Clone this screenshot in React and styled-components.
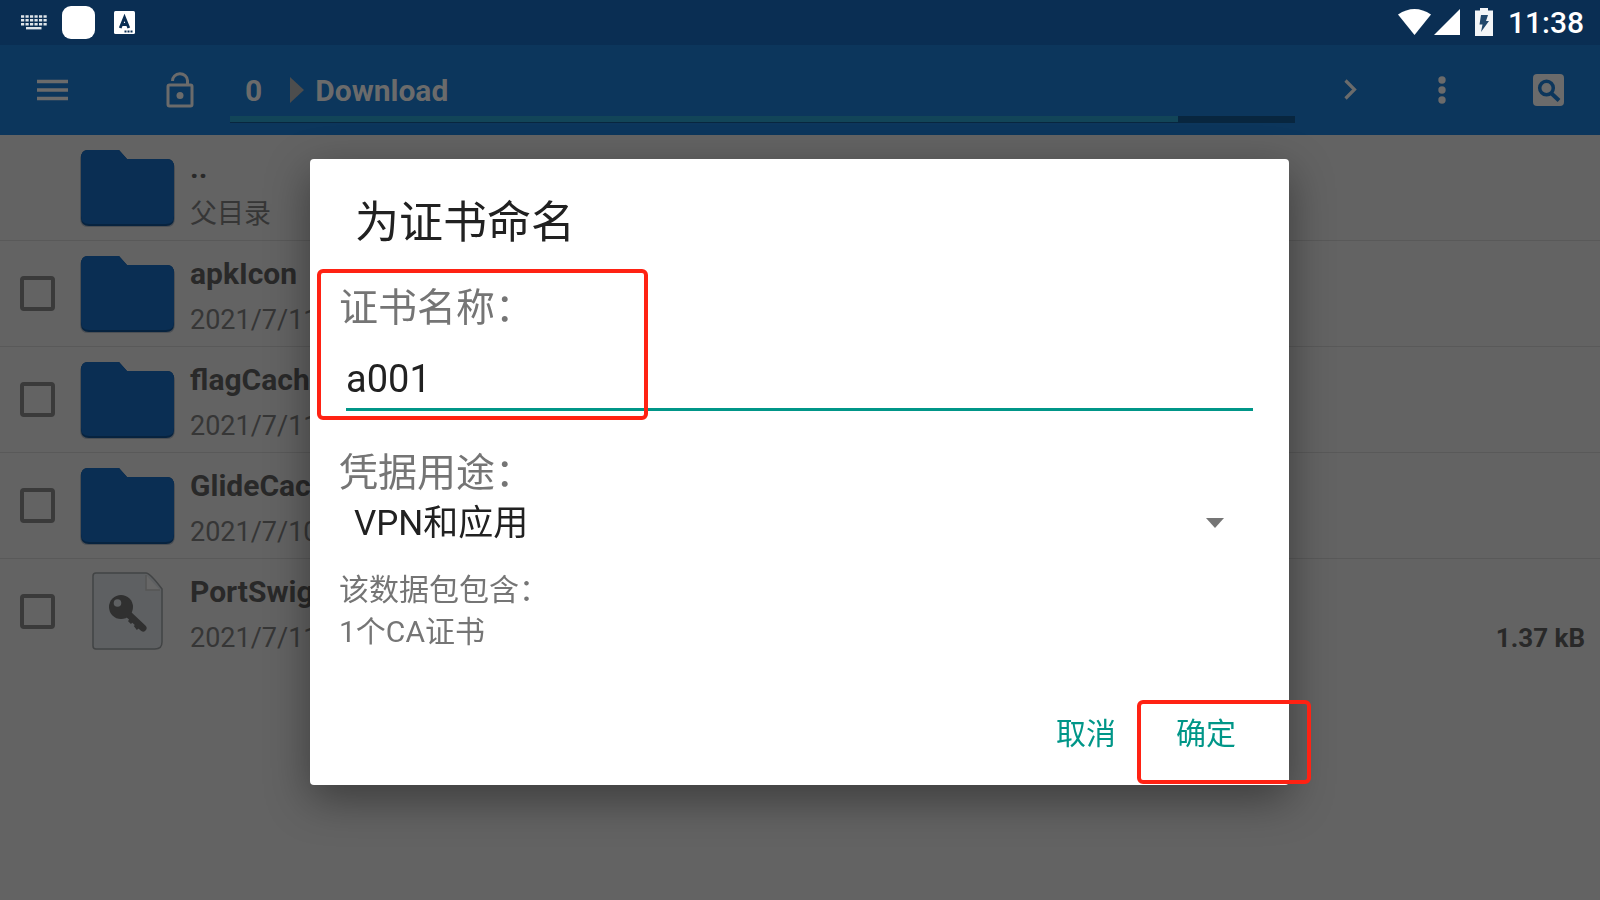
import React, { useState } from 'react';
import styled, { createGlobalStyle } from 'styled-components';

const GlobalStyle = createGlobalStyle`
    * {
        box-sizing: border-box;
    }
    body {
        margin: 0;
        background-color: #636363;
        font-family: Roboto, "Noto Sans CJK SC", sans-serif;
    }
    button, input, select {
        font-family: inherit;
    }
`;

const Screen = styled.div`
    min-height: 100vh;
    overflow: hidden;
`;

const StatusBar = styled.header`
    display: flex;
    align-items: center;
    justify-content: space-between;
    height: 45px;
    padding: 0 16px 0 21px;
    background-color: #0a2e53;
    color: #fff;
`;

const StatusGroup = styled.div`
    display: flex;
    align-items: center;
    gap: ${props => props.$gap}px;
`;

const AppBadge = styled.span`
    width: 33px;
    height: 33px;
    margin-right: 4px;
    border-radius: 9px;
    background-color: #fff;
`;

const Clock = styled.time`
    font-size: 30px;
    font-weight: 500;
    line-height: 44px;
`;

const Toolbar = styled.div`
    display: flex;
    align-items: center;
    height: 90px;
    padding: 0 28px;
    background-color: #0c365c;
`;

const IconButton = styled.button`
    display: flex;
    align-items: center;
    justify-content: center;
    width: 48px;
    height: 48px;
    margin: 0 0 0 ${props => props.$before || 0}px;
    padding: 0;
    border: 0;
    background: none;
    color: #6b6b6b;
`;

const PathBar = styled.div`
    display: flex;
    flex: 1;
    flex-direction: column;
    height: 90px;
    margin-left: 26px;
    padding-top: 21px;
`;

const Crumbs = styled.nav`
    display: flex;
    align-items: center;
    height: 50px;
    padding: 0 0 2px 15px;
`;

const Crumb = styled.a`
    color: #6b6b6b;
    font-size: 30px;
    font-weight: 700;
    text-decoration: none;
`;

const CrumbArrow = styled.svg`
    margin: 0 11px 0 28px;
`;

const StorageBar = styled.div`
    height: 7px;
    background-color: #08263f;
`;

const StorageUsed = styled.div`
    height: 6px;
    background-color: #124558;
`;

const FileList = styled.ul`
    margin: 0;
    padding: 0;
    list-style: none;
`;

const FileRow = styled.li`
    display: flex;
    align-items: center;
    height: 106px;
    padding: 0 15px 0 20px;
    border-bottom: 1px solid #595959;
    &:last-child {
        border-bottom-color: transparent;
    }
`;

const CheckSlot = styled.div`
    display: flex;
    width: 60px;
`;

const Check = styled.input`
    appearance: none;
    width: 35px;
    height: 35px;
    margin: 0;
    border: 4px solid #3a3a3a;
    border-radius: 4px;
`;

const Thumb = styled.div`
    display: flex;
    justify-content: center;
    width: 95px;
    margin-right: 15px;
`;

const FileText = styled.div`
    flex: 1;
    padding-top: 7px;
`;

const FileName = styled.div`
    color: #292929;
    font-size: 30px;
    font-weight: 700;
    line-height: 46px;
`;

const FileMeta = styled.div`
    display: flex;
    justify-content: space-between;
    color: #363636;
    font-size: 27px;
    line-height: 46px;
`;

const FileSize = styled.span`
    color: #292929;
    font-size: 26px;
    font-weight: 700;
`;

const Overlay = styled.div`
    position: fixed;
    inset: 0;
    display: flex;
    align-items: center;
    padding: 44px 311px 0 310px;
`;

const Dialog = styled.form`
    flex: 1;
    padding: 32px 36px 24px 29px;
    border-radius: 4px;
    background-color: #fff;
    box-shadow: 0 14px 44px rgba(0, 0, 0, 0.4);
`;

const Title = styled.h1`
    margin: 0 0 29px;
    padding-left: 16px;
    color: #212121;
    font-size: 44px;
    font-weight: 400;
    line-height: 64px;
`;

const Field = styled.div`
    position: relative;
    margin-bottom: ${props => props.$after}px;
`;

const Label = styled.label`
    display: block;
    color: #757575;
    font-size: 39px;
    line-height: 48px;
`;

const NameInput = styled.input`
    display: block;
    width: calc(100% - 7px);
    height: 79px;
    margin-left: 7px;
    padding: 17px 0 0;
    border: 0;
    border-bottom: 3px solid #009688;
    outline: 0;
    background: none;
    color: #212121;
    font-size: 38px;
`;

const SelectBox = styled.div`
    display: grid;
    align-items: center;
    & > * {
        grid-area: 1 / 1;
    }
`;

const UsageSelect = styled.select`
    appearance: none;
    height: 52px;
    padding: 0 15px;
    border: 0;
    background: none;
    color: #212121;
    font-size: 35px;
`;

const Caret = styled.svg`
    justify-self: end;
    margin-right: 29px;
    pointer-events: none;
`;

const Details = styled.p`
    margin: 0 0 48px;
    color: #757575;
    font-size: 30px;
    line-height: 42px;
`;

const Actions = styled.div`
    display: flex;
    justify-content: flex-end;
    gap: 28px;
    padding-right: 1px;
`;

const ActionSlot = styled.div`
    position: relative;
`;

const ActionButton = styled.button`
    height: 60px;
    padding: 0 16px;
    border: 0;
    background: none;
    color: #009688;
    font-size: 30px;
    font-weight: 400;
`;

const Marker = styled.span`
    position: absolute;
    top: ${props => props.$top}px;
    left: ${props => props.$left}px;
    width: ${props => props.$width}px;
    height: ${props => props.$height}px;
    border: 4px solid #ff2213;
    border-radius: 6px;
    pointer-events: none;
`;

const files = [
    { name: '..', meta: '父目录', parent: true },
    { name: 'apkIcon', meta: '2021/7/11' },
    { name: 'flagCache', meta: '2021/7/11' },
    { name: 'GlideCache', meta: '2021/7/10' },
    { name: 'PortSwig', meta: '2021/7/11', size: '1.37 kB', cert: true }
];

const storageUsed = 89;

const KeyboardIcon = () => (
    <svg width="26" height="15" viewBox="0 0 26 15" fill="none" stroke="#dfe5ea">
        <path d="M0 1.500h26M0 5.300h26M0 9.200h26" strokeWidth="2.600" strokeDasharray="3.200 1.300" />
        <path d="M5 13.200h15.500" strokeWidth="2.400" />
    </svg>
);

const LanguageIcon = () => (
    <svg width="21" height="23" viewBox="0 0 21 23">
        <rect width="21" height="23" rx="1.500" fill="#fff" />
        <path d="M6.200 17 10.500 6.500 14.800 17M7.500 13.500h6" fill="none" stroke="#0a2e53" strokeWidth="2.800" />
        <path d="M10.500 20.500h9" stroke="#0a2e53" strokeWidth="1.800" strokeDasharray="2 1" />
    </svg>
);

const WifiIcon = () => (
    <svg width="33" height="28" viewBox="0 0 33 28" fill="#fff">
        <path d="M0 5.500Q16.500-5.500 33 5.500L16.500 26Z" />
    </svg>
);

const SignalIcon = () => (
    <svg width="26" height="28" viewBox="0 0 26 28" fill="#fff">
        <path d="M26 0v26H0z" />
    </svg>
);

const BatteryIcon = () => (
    <svg width="18" height="30" viewBox="0 0 18 30">
        <path d="M5 0h8v2.500h5V28H0V2.500h5z" fill="#f3f5f7" />
        <path d="M6 7h7l-2 6h3L6 24l1.500-7.500H4.500z" fill="#21476b" />
    </svg>
);

const MenuIcon = () => (
    <svg width="31" height="22" viewBox="0 0 31 22" stroke="currentColor" strokeWidth="3.500">
        <path d="M0 2.500h31M0 11h31M0 19.500h31" />
    </svg>
);

const LockIcon = () => (
    <svg width="28" height="36" viewBox="0 0 28 36" fill="none" stroke="currentColor" strokeWidth="3">
        <rect x="2" y="13" width="24" height="21" rx="1.500" />
        <path d="M6.500 9a7.500 7 0 0 1 15-.5v4.500" />
        <circle cx="14" cy="23.500" r="3.500" fill="currentColor" stroke="none" />
    </svg>
);

const ChevronIcon = () => (
    <svg width="14" height="22" viewBox="0 0 14 22" fill="none" stroke="currentColor" strokeWidth="3.200">
        <path d="M2.500 1.500l9 9-9 9" />
    </svg>
);

const MoreIcon = () => (
    <svg width="8" height="28" viewBox="0 0 8 28" fill="currentColor">
        <circle cx="4" cy="4" r="3.700" />
        <circle cx="4" cy="14" r="3.700" />
        <circle cx="4" cy="24" r="3.700" />
    </svg>
);

const SearchIcon = () => (
    <svg width="31" height="32" viewBox="0 0 31 32">
        <rect width="31" height="32" rx="4" fill="currentColor" />
        <circle cx="13.500" cy="14" r="6.800" fill="none" stroke="#0c365c" strokeWidth="3.500" />
        <path d="M18 19l8 7.500" stroke="#0c365c" strokeWidth="4" />
    </svg>
);

const FolderIcon = () => (
    <svg width="95" height="78" viewBox="0 0 95 78">
        <path d="M8 3h31l8 9h40q8 0 8 8v49q0 9-8 9H8q-8 0-8-9V11q0-8 8-8z" fill="#4b4f54" />
        <path d="M8 1h31l8 9h40q7 0 7 8v51q0 8-8 8H9q-8 0-8-8V9q0-8 7-8z" fill="#07233f" />
        <path d="M8 1h31l8 9h40q7 0 7 8v49q0 8-8 8H9q-8 0-8-8V9q0-8 7-8z" fill="#0a2e53" />
    </svg>
);

const CertIcon = () => (
    <svg width="71" height="80" viewBox="0 0 71 80">
        <path d="M4 1h50q4 0 16 16v53q0 7-7 7H4q-3 0-3-3V4q0-3 3-3z" fill="#5e6062" stroke="#424445" strokeWidth="1.500" />
        <path d="M54 3v15h14" fill="#676767" stroke="#555" strokeWidth="1.500" />
        <path d="M34 40l17 16" stroke="#303030" strokeWidth="7" strokeLinecap="round" />
        <path d="M37 48l3 3m3 2 3 4" stroke="#303030" strokeWidth="3" />
        <circle cx="29" cy="35" r="12" fill="#303030" />
        <circle cx="25.500" cy="31" r="3.800" fill="#5e6062" />
    </svg>
);

const CertificateDialog = () => {
    const [name, setName] = useState('a001');

    return (
        <Overlay>
            <Dialog role="dialog" aria-labelledby="dialog-title" onSubmit={e => e.preventDefault()}>
                <Title id="dialog-title">为证书命名</Title>
                <Field $after={38}>
                    <Label htmlFor="cert-name">证书名称：</Label>
                    <NameInput id="cert-name" type="text" value={name} onChange={e => setName(e.target.value)} />
                    <Marker $top={-15} $left={-22} $width={331} $height={151} />
                </Field>
                <Field $after={20}>
                    <Label htmlFor="cert-usage">凭据用途：</Label>
                    <SelectBox>
                        <UsageSelect id="cert-usage" defaultValue="vpn">
                            <option value="vpn">VPN和应用</option>
                            <option value="wifi">WLAN</option>
                        </UsageSelect>
                        <Caret width="18" height="10" viewBox="0 0 18 10" fill="#757575">
                            <path d="M0 0h18L9 10z" />
                        </Caret>
                    </SelectBox>
                </Field>
                <Details>
                    该数据包包含：<br />
                    1个CA证书
                </Details>
                <Actions>
                    <ActionButton type="button">取消</ActionButton>
                    <ActionSlot>
                        <ActionButton type="submit">确定</ActionButton>
                        <Marker $top={-1} $left={-23} $width={174} $height={84} />
                    </ActionSlot>
                </Actions>
            </Dialog>
        </Overlay>
    );
};

const App = () => (
    <Screen>
        <GlobalStyle />
        <StatusBar>
            <StatusGroup $gap={15}>
                <KeyboardIcon />
                <AppBadge />
                <LanguageIcon />
            </StatusGroup>
            <StatusGroup $gap={15}>
                <StatusGroup $gap={3}>
                    <WifiIcon />
                    <SignalIcon />
                </StatusGroup>
                <BatteryIcon />
                <Clock>11:38</Clock>
            </StatusGroup>
        </StatusBar>
        <Toolbar>
            <IconButton aria-label="菜单"><MenuIcon /></IconButton>
            <IconButton $before={80} aria-label="锁定"><LockIcon /></IconButton>
            <PathBar>
                <Crumbs>
                    <Crumb href="#root">0</Crumb>
                    <CrumbArrow width="14" height="26" viewBox="0 0 14 26" fill="#4d4d4d">
                        <path d="M0 0l14 13L0 26z" />
                    </CrumbArrow>
                    <Crumb href="#download">Download</Crumb>
                </Crumbs>
                <StorageBar>
                    <StorageUsed style={{ width: `${storageUsed}%` }} />
                </StorageBar>
            </PathBar>
            <IconButton $before={31} aria-label="前进"><ChevronIcon /></IconButton>
            <IconButton $before={44} aria-label="更多"><MoreIcon /></IconButton>
            <IconButton $before={58} aria-label="搜索"><SearchIcon /></IconButton>
        </Toolbar>
        <FileList>
            {files.map(file => (
                <FileRow key={file.name}>
                    <CheckSlot>
                        {!file.parent && <Check type="checkbox" aria-label={file.name} />}
                    </CheckSlot>
                    <Thumb>
                        {file.cert ? <CertIcon /> : <FolderIcon />}
                    </Thumb>
                    <FileText>
                        <FileName>{file.name}</FileName>
                        <FileMeta>
                            <span>{file.meta}</span>
                            {file.size && <FileSize>{file.size}</FileSize>}
                        </FileMeta>
                    </FileText>
                </FileRow>
            ))}
        </FileList>
        <CertificateDialog />
    </Screen>
);

export default App;
